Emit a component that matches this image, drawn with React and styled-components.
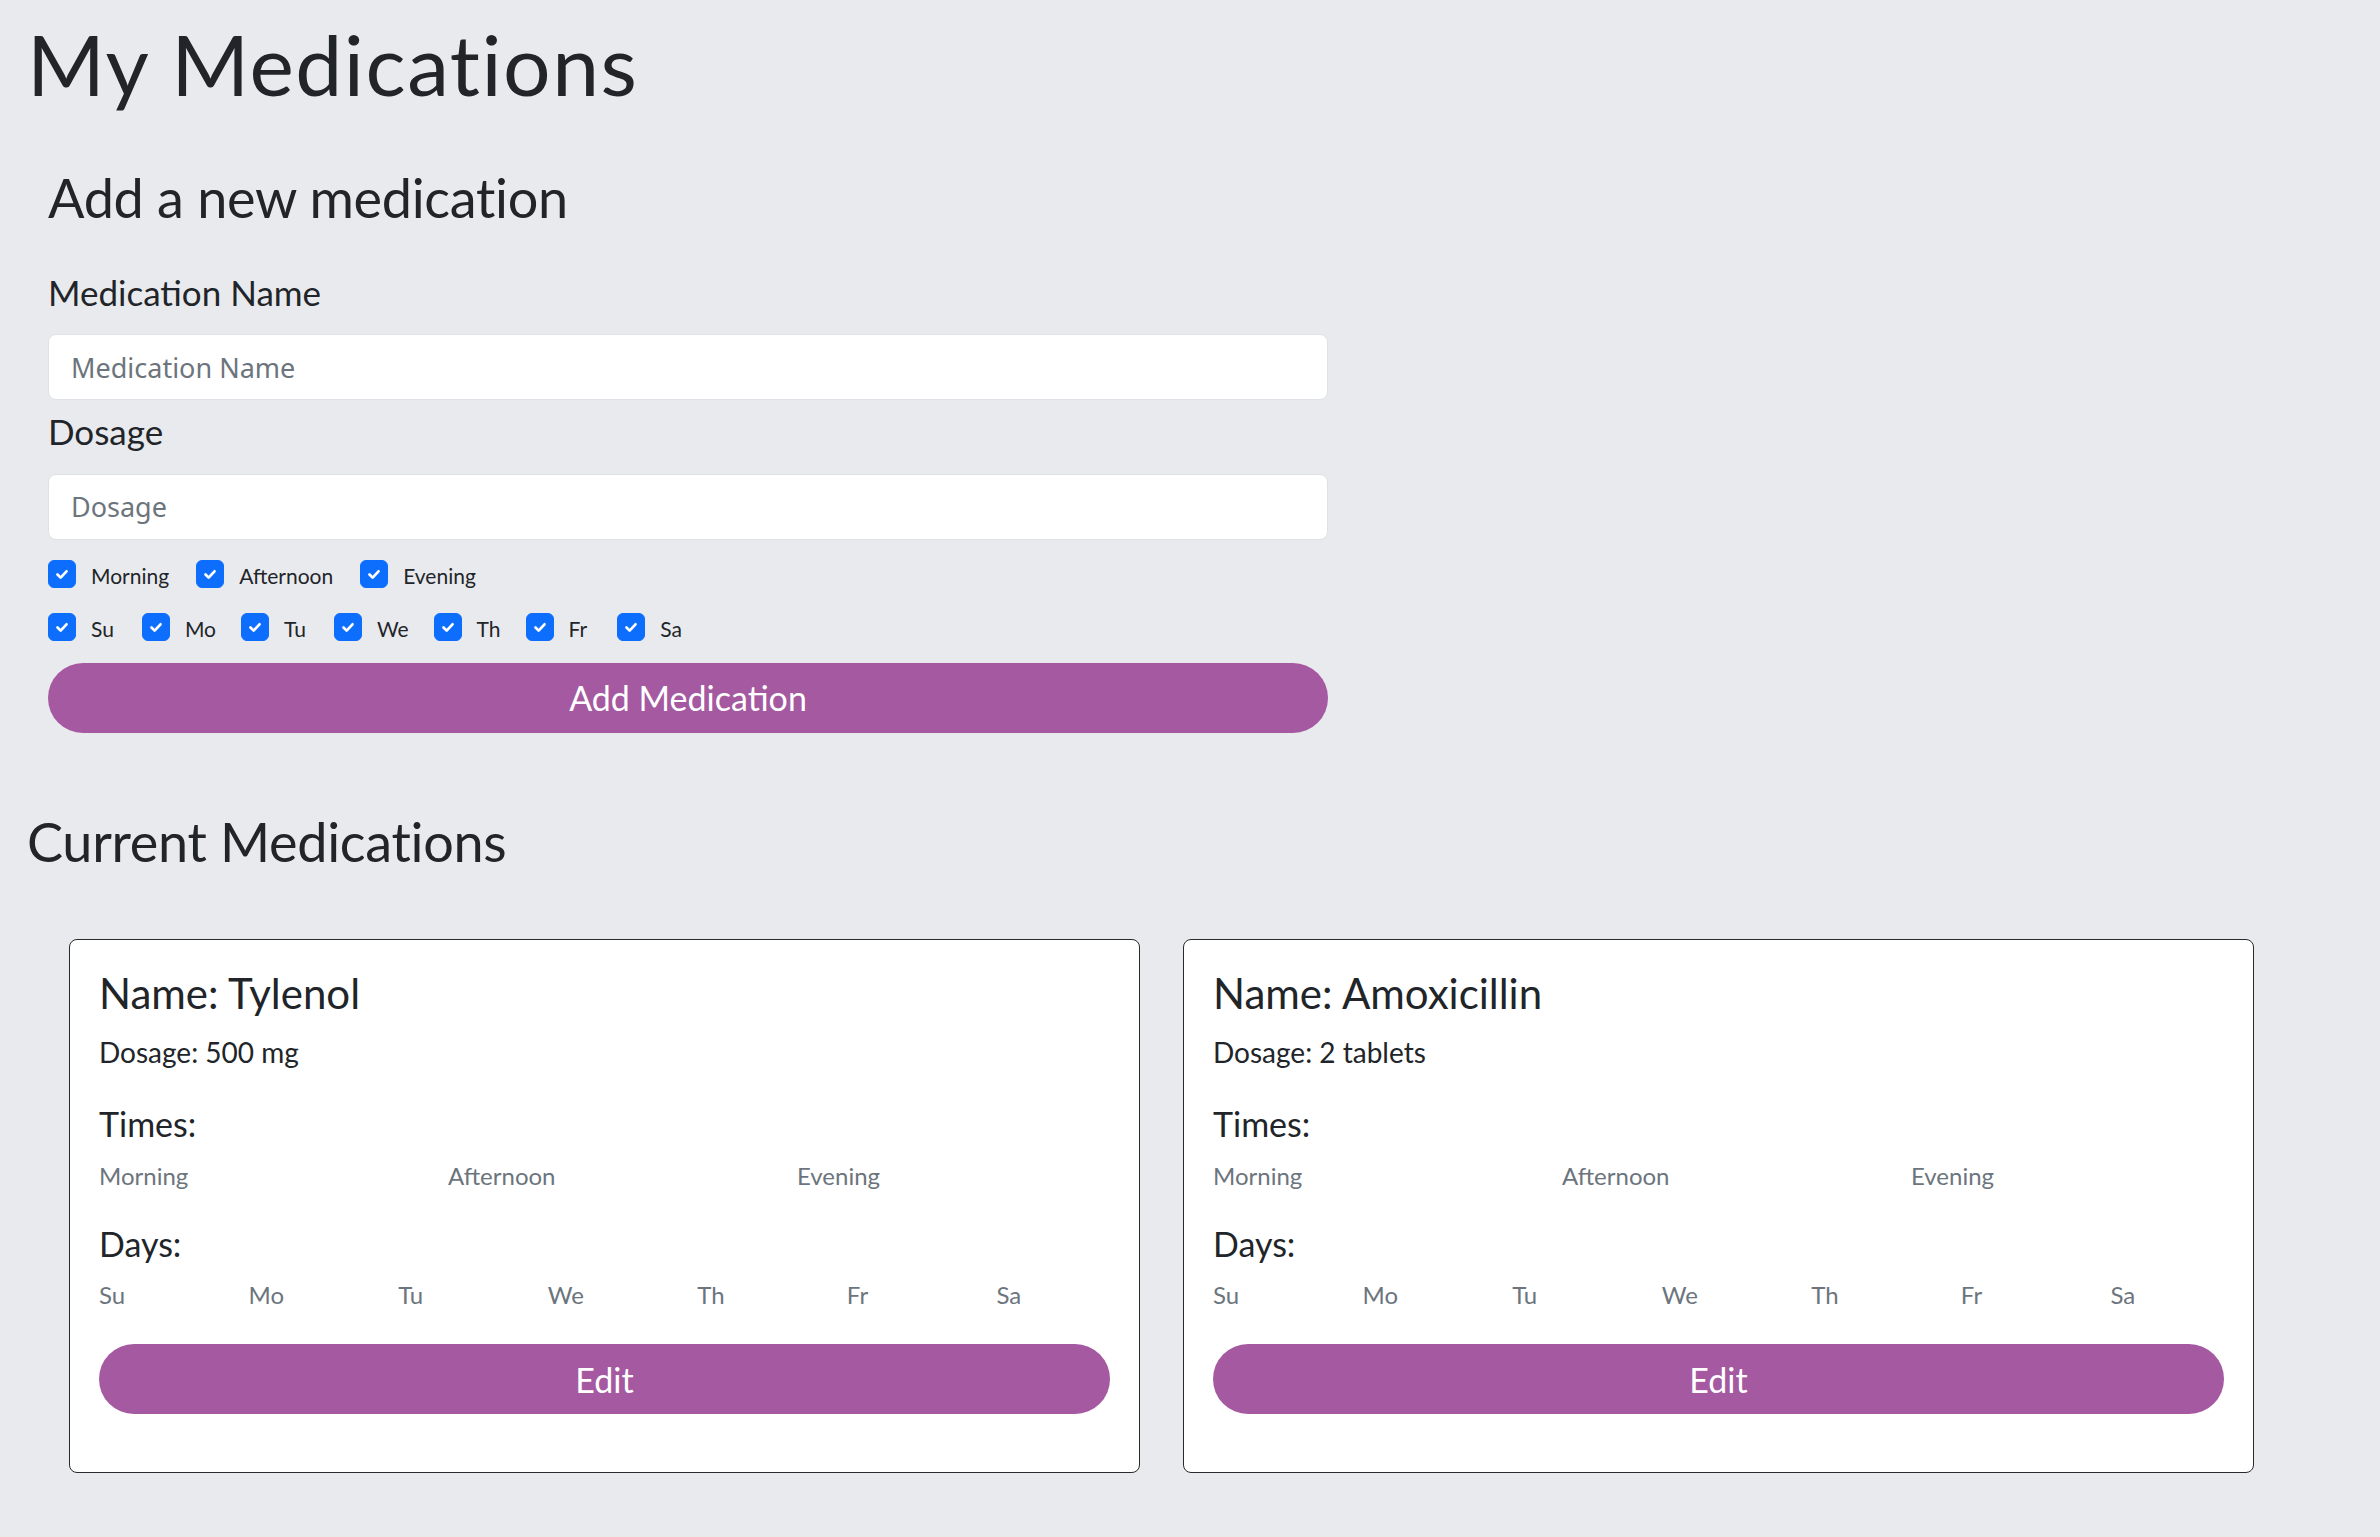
import React, { useState } from 'react';
import styled, { createGlobalStyle } from 'styled-components';

const GlobalStyle = createGlobalStyle`
  html, body {
    margin: 0;
    padding: 0;
    background: #e9eaee;
  }
  body {
    font-family: Lato, "Noto Sans", sans-serif;
    color: #212529;
  }
  * { box-sizing: border-box; }
`;

const Page = styled.div`
  padding: 14px 27px 60px 27px;
`;

const PageTitle = styled.h1`
  margin: 0;
  font-size: 84px;
  font-weight: 400;
  line-height: 1.2;
  letter-spacing: 1.5px;
`;

const FormSection = styled.form`
  width: 1301px;
  padding: 51px 0 0 21px;
  display: flex;
  flex-direction: column;
`;

const SectionTitle = styled.h2`
  margin: ${p => p.top || 0}px 0 0;
  font-size: 54px;
  font-weight: 400;
  line-height: 1.2;
  letter-spacing: -0.3px;
`;

const FieldLabel = styled.label`
  display: block;
  font-size: 35px;
  line-height: 1.5;
  margin: ${p => p.first ? '35px' : '5px'} 0 16px;
`;

const TextInput = styled.input`
  width: 100%;
  height: 66px;
  padding: 0 22px;
  border: 1.5px solid #dee2e6;
  border-radius: 8px;
  background: #fff;
  font-family: "Noto Sans", "Open Sans", sans-serif;
  font-size: 27px;
  color: #212529;
  outline: none;

  &::placeholder {
    color: #6c757d;
  }
`;

const CheckRow = styled.div`
  display: flex;
  align-items: center;
  margin-top: ${p => p.top}px;
`;

const CheckItem = styled.label`
  display: flex;
  align-items: center;
  gap: 15px;
  margin-right: ${p => p.gap}px;
  font-size: 21px;
  line-height: 1;
  cursor: pointer;

  span:last-child {
    padding-top: 4px;
  }
`;

const CheckBox = styled.span`
  width: 28px;
  height: 28px;
  border-radius: 6px;
  background: ${p => p.checked ? '#0d6efd' : '#fff'};
  border: 1.5px solid ${p => p.checked ? '#0d6efd' : '#adb5bd'};
  display: flex;
  align-items: center;
  justify-content: center;
`;

const PillButton = styled.button`
  width: 100%;
  height: ${p => p.h}px;
  border: none;
  border-radius: 999px;
  background: #a459a0;
  color: #fff;
  font-family: Lato, "Noto Sans", sans-serif;
  font-size: 34px;
  cursor: pointer;
`;

const CardGrid = styled.div`
  display: grid;
  grid-template-columns: 1071px 1071px;
  gap: 43px;
  padding: 65px 0 0 42px;
`;

const Card = styled.div`
  background: #fff;
  border: 1.5px solid #2a2a2a;
  border-radius: 8px;
  padding: 28px 29px 58px;
`;

const CardName = styled.h3`
  margin: 0;
  font-size: 42px;
  font-weight: 400;
  line-height: 1.2;
`;

const CardDosage = styled.p`
  margin: 12px 0 0;
  font-size: 28px;
  line-height: 1.5;
`;

const CardSub = styled.h4`
  margin: ${p => p.top}px 0 0;
  font-size: 34px;
  font-weight: 400;
  line-height: 1.2;
`;

const ColRow = styled.div`
  display: grid;
  grid-template-columns: repeat(${p => p.cols}, 1fr);
  margin: 13px -18px 0;
`;

const ColCell = styled.div`
  padding: 0 18px;
  font-size: 24px;
  line-height: 1.5;
  color: #6c757d;
`;

const CardButtonWrap = styled.div`
  margin-top: 31px;
`;

const times = ['Morning', 'Afternoon', 'Evening'];
const days = ['Su', 'Mo', 'Tu', 'We', 'Th', 'Fr', 'Sa'];
const timeGaps = [27, 27, 0];
const dayGaps = [28, 25, 28, 25, 25, 30, 0];

const meds = [
  { name: 'Tylenol', dosage: '500 mg' },
  { name: 'Amoxicillin', dosage: '2 tablets' },
];

const Check = ({ checked }) => (
  <CheckBox checked={checked}>
    {checked && (
      <svg width="18" height="18" viewBox="0 0 20 20" fill="none">
        <path d="M5 10.5l3.5 3.5L15 7" stroke="#fff" strokeWidth="3" strokeLinecap="round" strokeLinejoin="round" />
      </svg>
    )}
  </CheckBox>
);

const App = () => {
  const [checkedTimes, setCheckedTimes] = useState(times.map(() => true));
  const [checkedDays, setCheckedDays] = useState(days.map(() => true));

  const toggle = (list, setList, idx) => {
    const next = [...list];
    next[idx] = !next[idx];
    setList(next);
  };

  return (
    <>
      <GlobalStyle />
      <Page>
        <PageTitle>My Medications</PageTitle>

        <FormSection onSubmit={e => e.preventDefault()}>
          <SectionTitle>Add a new medication</SectionTitle>

          <FieldLabel first>Medication Name</FieldLabel>
          <TextInput placeholder="Medication Name" />

          <FieldLabel>Dosage</FieldLabel>
          <TextInput placeholder="Dosage" />

          <CheckRow top={20}>
            {times.map((t, i) => (
              <CheckItem key={t} gap={timeGaps[i]} onClick={() => toggle(checkedTimes, setCheckedTimes, i)}>
                <Check checked={checkedTimes[i]} />
                <span>{t}</span>
              </CheckItem>
            ))}
          </CheckRow>

          <CheckRow top={25}>
            {days.map((d, i) => (
              <CheckItem key={d} gap={dayGaps[i]} onClick={() => toggle(checkedDays, setCheckedDays, i)}>
                <Check checked={checkedDays[i]} />
                <span>{d}</span>
              </CheckItem>
            ))}
          </CheckRow>

          <CheckRow top={22}>
            <PillButton h={70} type="submit">Add Medication</PillButton>
          </CheckRow>
        </FormSection>

        <SectionTitle top={77}>Current Medications</SectionTitle>

        <CardGrid>
          {meds.map(m => (
            <Card key={m.name}>
              <CardName>Name: {m.name}</CardName>
              <CardDosage>Dosage: {m.dosage}</CardDosage>
              <CardSub top={31}>Times:</CardSub>
              <ColRow cols={3}>
                {times.map(t => <ColCell key={t}>{t}</ColCell>)}
              </ColRow>
              <CardSub top={30}>Days:</CardSub>
              <ColRow cols={7}>
                {days.map(d => <ColCell key={d}>{d}</ColCell>)}
              </ColRow>
              <CardButtonWrap>
                <PillButton h={70}>Edit</PillButton>
              </CardButtonWrap>
            </Card>
          ))}
        </CardGrid>
      </Page>
    </>
  );
};

export default App;
